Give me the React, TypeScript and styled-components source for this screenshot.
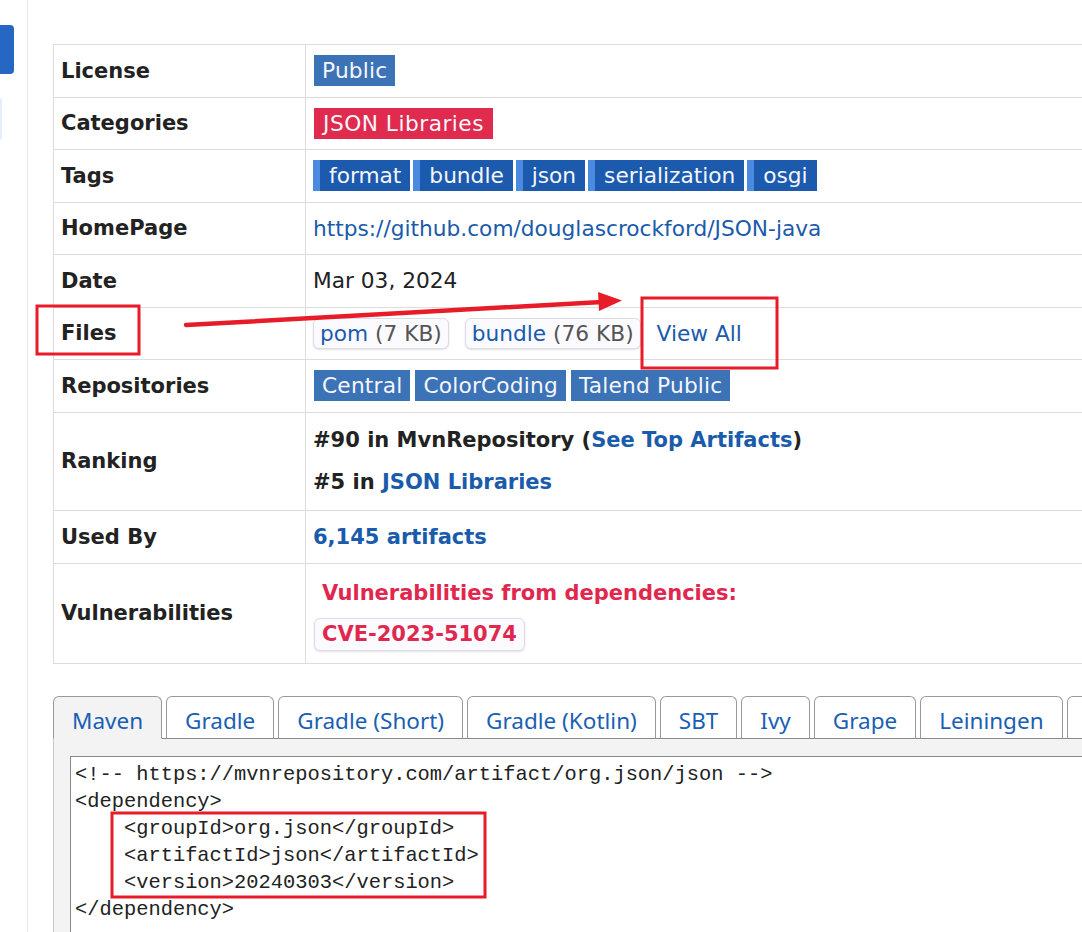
import React from "react";
import styled, { createGlobalStyle } from "styled-components";

const Global = createGlobalStyle`
  html, body { margin: 0; padding: 0; background: #fff; overflow: hidden; }
  body { font-family: "DejaVu Sans", Verdana, sans-serif; color: #222; }
  * { box-sizing: border-box; }
`;

const Page = styled.div`
  position: relative;
  display: flex;
  width: 1082px;
  height: 932px;
  overflow: hidden;
`;

const Sidebar = styled.aside`
  flex: 0 0 28px;
  border-right: 1px solid #e6e6e6;
  display: flex;
  flex-direction: column;
  align-items: flex-start;
`;

const SideTab = styled.div<{ $faint?: boolean }>`
  width: ${(p) => (p.$faint ? "2px" : "14px")};
  height: ${(p) => (p.$faint ? "42px" : "49px")};
  margin-top: ${(p) => (p.$faint ? "24px" : "25px")};
  background: ${(p) => (p.$faint ? "#e6eefa" : "#2567c3")};
  border-radius: 0 4px 4px 0;
`;

const Main = styled.main`
  flex: 1;
  min-width: 0;
  padding: 44px 0 0 25px;
  overflow: hidden;
`;

const Table = styled.table`
  width: 1040px;
  border-collapse: collapse;
  table-layout: fixed;
  font-size: 21.7px;
`;

const Row = styled.tr<{ $tall?: boolean }>`
  height: ${(p) => (p.$tall ? "98.5px" : "52.5px")};
`;

const Label = styled.th`
  width: 252px;
  text-align: left;
  font-weight: bold;
  font-size: 21px;
  padding: 0 7px;
  border: 1px solid #ddd;
  vertical-align: middle;
  color: #222;
`;

const Value = styled.td`
  padding: 0 7px;
  border: 1px solid #ddd;
  vertical-align: middle;
  white-space: nowrap;
`;

const Inline = styled.div<{ $gap: number }>`
  display: flex;
  align-items: center;
  gap: ${(p) => p.$gap}px;
`;

const Badge = styled.span<{ $tone: "blue" | "red" }>`
  display: inline-block;
  height: 31px;
  line-height: 31px;
  padding: 0 ${(p) => (p.$tone === "red" ? "9px" : "8px")};
  margin-left: 1px;
  color: #f4f6fb;
  letter-spacing: ${(p) => (p.$tone === "red" ? "0.5px" : "0.2px")};
  background: ${(p) => (p.$tone === "red" ? "#e02a4e" : "#3c72b6")};
`;

const Tag = styled.span`
  display: inline-block;
  height: 31px;
  line-height: 31px;
  padding: 0 9px;
  color: #f4f6fb;
  background: #1b5aad;
  border-left: 7px solid #4a8be0;
`;

const Link = styled.a<{ $bold?: boolean }>`
  color: #1a5bab;
  text-decoration: none;
  font-weight: ${(p) => (p.$bold ? "bold" : "normal")};
`;

const Pill = styled.span`
  display: inline-flex;
  align-items: center;
  height: 31px;
  padding: 0 6px;
  border: 1px solid #dcdce4;
  border-radius: 6px;
  background: #fafaff;
  box-shadow: 0 1px 2px rgba(0, 0, 0, 0.12);
  white-space: pre;
`;

const Size = styled.span`
  color: #555;
`;

const RankLine = styled.div`
  line-height: 42px;
  font-size: 21px;
  font-weight: bold;
  color: #222;
`;

const UsedBy = styled(Link)`
  font-size: 21px;
`;

const VulnCell = styled.td`
  padding: 16px 7px 12px;
  border: 1px solid #ddd;
  vertical-align: top;
  white-space: nowrap;
  font-size: 21px;
`;

const VulnTitle = styled.div`
  line-height: 26px;
  padding-left: 9px;
  font-weight: bold;
  color: #e0284f;
`;

const CvePill = styled(Pill)`
  margin-top: 12px;
  height: 33px;
  margin-left: 1px;
  padding: 0 7px;
  font-weight: bold;
  color: #e0284f;
`;

const Tabs = styled.section`
  margin-top: 32px;
`;

const TabList = styled.div`
  position: relative;
  z-index: 1;
  display: flex;
  flex-wrap: nowrap;
  gap: 4px;
  margin-bottom: -1px;
  font-family: "Noto Sans", "Open Sans", sans-serif;
  font-size: 22.5px;
`;

const Tab = styled.div<{ $active?: boolean }>`
  flex: 0 0 auto;
  min-width: 60px;
  height: 43px;
  padding: 8px 18px 0;
  line-height: 31px;
  color: #1a5fb4;
  white-space: nowrap;
  background: ${(p) => (p.$active ? "#f3f3f3" : "#fff")};
  border: 1px solid #999;
  border-bottom: 1px solid ${(p) => (p.$active ? "#f3f3f3" : "#8a8a8a")};
  border-radius: 6px 6px 0 0;
`;

const Panel = styled.div`
  width: 1040px;
  background: #f3f3f3;
  border: 1px solid #8a8a8a;
  border-left-color: #c8c8c8;
  padding: 17px 0 0 16px;
`;

const Code = styled.pre`
  margin: 0;
  min-height: 220px;
  padding: 4px 4px;
  background: #fff;
  border: 1px solid #8a8a8a;
  font-family: "Liberation Mono", "DejaVu Sans Mono", monospace;
  font-size: 20.4px;
  line-height: 27px;
  color: #222;
`;

const Overlay = styled.svg`
  position: absolute;
  left: 0;
  top: 0;
  pointer-events: none;
`;

const tags = ["format", "bundle", "json", "serialization", "osgi"];
const repos = ["Central", "ColorCoding", "Talend Public"];
const tabs = [
  "Maven",
  "Gradle",
  "Gradle (Short)",
  "Gradle (Kotlin)",
  "SBT",
  "Ivy",
  "Grape",
  "Leiningen",
];

const code = `<!-- https://mvnrepository.com/artifact/org.json/json -->
<dependency>
    <groupId>org.json</groupId>
    <artifactId>json</artifactId>
    <version>20240303</version>
</dependency>`;

export default function App() {
  return (
    <Page>
      <Global />
      <Sidebar>
        <SideTab />
        <SideTab $faint />
      </Sidebar>
      <Main>
        <Table>
          <tbody>
            <Row>
              <Label>License</Label>
              <Value>
                <Badge $tone="blue">Public</Badge>
              </Value>
            </Row>
            <Row>
              <Label>Categories</Label>
              <Value>
                <Badge $tone="red">JSON Libraries</Badge>
              </Value>
            </Row>
            <Row>
              <Label>Tags</Label>
              <Value>
                <Inline $gap={3}>
                  {tags.map((t) => (
                    <Tag key={t}>{t}</Tag>
                  ))}
                </Inline>
              </Value>
            </Row>
            <Row>
              <Label>HomePage</Label>
              <Value>
                <Link href="#">https://github.com/douglascrockford/JSON-java</Link>
              </Value>
            </Row>
            <Row>
              <Label>Date</Label>
              <Value>Mar 03, 2024</Value>
            </Row>
            <Row>
              <Label>Files</Label>
              <Value>
                <Inline $gap={16}>
                  <Pill>
                    <Link href="#">pom</Link>
                    <Size> (7 KB)</Size>
                  </Pill>
                  <Pill>
                    <Link href="#">bundle</Link>
                    <Size> (76 KB)</Size>
                  </Pill>
                  <Link href="#">View All</Link>
                </Inline>
              </Value>
            </Row>
            <Row>
              <Label>Repositories</Label>
              <Value>
                <Inline $gap={4}>
                  {repos.map((r) => (
                    <Badge key={r} $tone="blue">
                      {r}
                    </Badge>
                  ))}
                </Inline>
              </Value>
            </Row>
            <Row $tall>
              <Label>Ranking</Label>
              <Value>
                <RankLine>
                  #90 in MvnRepository (<Link href="#" $bold>See Top Artifacts</Link>)
                </RankLine>
                <RankLine>
                  #5 in <Link href="#" $bold>JSON Libraries</Link>
                </RankLine>
              </Value>
            </Row>
            <Row>
              <Label>Used By</Label>
              <Value>
                <UsedBy href="#" $bold>6,145 artifacts</UsedBy>
              </Value>
            </Row>
            <Row $tall>
              <Label>Vulnerabilities</Label>
              <VulnCell>
                <VulnTitle>Vulnerabilities from dependencies:</VulnTitle>
                <CvePill>CVE-2023-51074</CvePill>
              </VulnCell>
            </Row>
          </tbody>
        </Table>
        <Tabs>
          <TabList>
            {tabs.map((t, i) => (
              <Tab key={t} $active={i === 0}>
                {t}
              </Tab>
            ))}
            <Tab aria-label="Buildr" />
          </TabList>
          <Panel>
            <Code>{code}</Code>
          </Panel>
        </Tabs>
      </Main>
      <Overlay width="1082" height="932" viewBox="0 0 1082 932">
        <g fill="none" stroke="#e81c28" strokeWidth="3">
          <rect x="37" y="306" width="102" height="48" />
          <rect x="642" y="298" width="135" height="70" />
          <rect x="112" y="813" width="373" height="84" />
          <line x1="186" y1="325" x2="602" y2="302" strokeWidth="4.5" strokeLinecap="round" />
        </g>
        <polygon points="622,300.5 598,292 599,311" fill="#e81c28" />
      </Overlay>
    </Page>
  );
}
